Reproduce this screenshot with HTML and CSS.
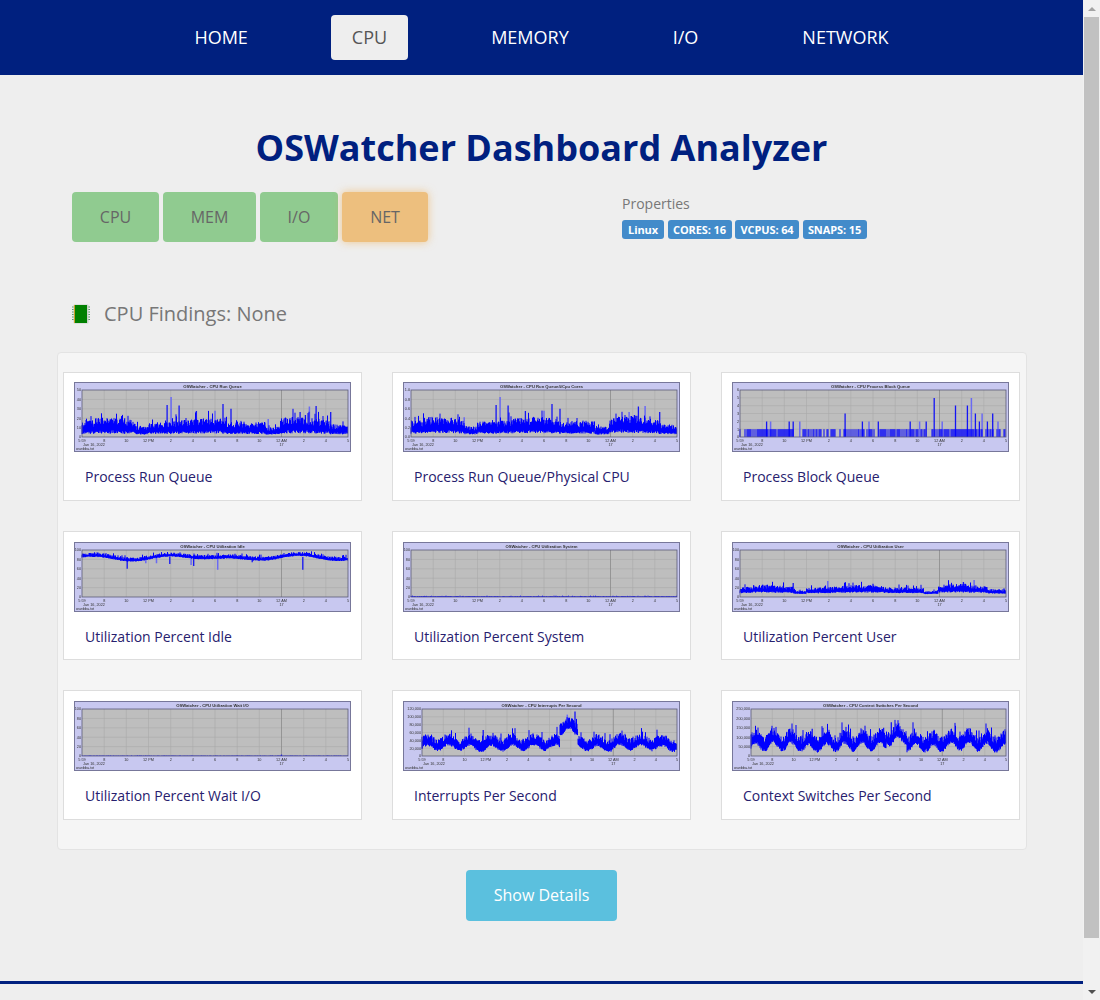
FILE: index.html
```html
<!DOCTYPE html>
<html lang="en">
<head>
    <meta charset="UTF-8">
    <meta name="viewport" content="width=device-width, initial-scale=1.0">
    <title>OSWatcher Dashboard Analyzer</title>
    <link rel="stylesheet" href="styles.css">
</head>
<body>

    <nav class="topnav">
        <a href="#">HOME</a>
        <a href="#" class="active">CPU</a>
        <a href="#">MEMORY</a>
        <a href="#">I/O</a>
        <a href="#">NETWORK</a>
    </nav>

    <main>
        <h1>OSWatcher Dashboard Analyzer</h1>

        <div class="summary">
            <div class="status-btns">
                <a href="#" class="status ok">CPU</a>
                <a href="#" class="status ok">MEM</a>
                <a href="#" class="status ok">I/O</a>
                <a href="#" class="status warn">NET</a>
            </div>
            <div class="properties">
                <p>Properties</p>
                <div class="badges">
                    <span class="badge">Linux</span>
                    <span class="badge">CORES: 16</span>
                    <span class="badge">VCPUS: 64</span>
                    <span class="badge">SNAPS: 15</span>
                </div>
            </div>
        </div>

        <h3 class="findings">
            <svg class="chip" width="18" height="20" viewBox="0 0 18 20">
                <g class="chip-pins">
                    <path d="M0 3h2M0 5.500h2M0 8h2M0 10.500h2M0 13h2M0 15.500h2"/>
                    <path d="M16 3h2M16 5.500h2M16 8h2M16 10.500h2M16 13h2M16 15.500h2"/>
                </g>
                <rect class="chip-case" x="1.500" y="0.500" width="15" height="19" rx="1"/>
                <rect class="chip-body" x="3" y="1" width="12" height="18"/>
                <rect class="chip-edge" x="2" y="1" width="1" height="18"/>
            </svg>
            CPU Findings: None
        </h3>

        <section class="well">
            <a href="#" class="thumb"><svg data-chart="runq"></svg><span>Process Run Queue</span></a>
            <a href="#" class="thumb"><svg data-chart="runqcpu"></svg><span>Process Run Queue/Physical CPU</span></a>
            <a href="#" class="thumb"><svg data-chart="block"></svg><span>Process Block Queue</span></a>
            <a href="#" class="thumb"><svg data-chart="idle"></svg><span>Utilization Percent Idle</span></a>
            <a href="#" class="thumb"><svg data-chart="system"></svg><span>Utilization Percent System</span></a>
            <a href="#" class="thumb"><svg data-chart="user"></svg><span>Utilization Percent User</span></a>
            <a href="#" class="thumb"><svg data-chart="wait"></svg><span>Utilization Percent Wait I/O</span></a>
            <a href="#" class="thumb"><svg data-chart="intr"></svg><span>Interrupts Per Second</span></a>
            <a href="#" class="thumb"><svg data-chart="ctx"></svg><span>Context Switches Per Second</span></a>
        </section>

        <div class="more">
            <button type="button">Show Details</button>
        </div>
    </main>

    <footer></footer>

    <div class="scrollbar">
        <span class="arrow up"></span>
        <span class="thumb-bar"></span>
        <span class="arrow down"></span>
    </div>

    <script src="charts.js"></script>
</body>
</html>
```

FILE: styles.css
```css
* {
    box-sizing: border-box;
    margin: 0;
    padding: 0;
}

html, body {
    height: 1000px;
    overflow: hidden;
}

body {
    font-family: 'Open Sans', sans-serif;
    font-size: 14px;
    background: #eee;
    color: #555;
    padding-right: 17px;
}

a {
    text-decoration: none;
}

/* top menu */
.topnav {
    background: #00207f;
    height: 75px;
    padding: 15px 0;
    display: flex;
    justify-content: center;
    gap: 62px;
}

.topnav a {
    color: #fff;
    font-size: 18px;
    line-height: 25px;
    padding: 10px 21px;
    border-radius: 4px;
}

.topnav a.active {
    background: #eee;
    color: #555;
}

h1 {
    color: #00207f;
    font-size: 36px;
    font-weight: 700;
    line-height: 49px;
    text-align: center;
    margin: 48px 0 20px;
}

.summary {
    display: flex;
    padding-left: 72px;
    height: 50px;
}

.status-btns {
    display: grid;
    grid-template-columns: 87px 93px 78px 86px;
    gap: 4px;
    width: 550px;
}

.status {
    height: 50px;
    font-size: 16px;
    line-height: 50px;
    text-align: center;
    border-radius: 4px;
    color: #666;
}

.status.ok {
    background: #90cb90;
}

.status.warn {
    background: #edbf7e;
    box-shadow: 0 0 8px rgba(240, 173, 78, 0.6);
}

.properties {
    padding-top: 2px;
}

.properties p {
    color: #777;
    font-size: 14px;
    line-height: 19px;
    margin-bottom: 7px;
}

.badges {
    display: grid;
    grid-template-columns: 42px 64px 64px 64px;
    gap: 3.500px;
}

.badge {
    background: #428bca;
    color: #fff;
    font-size: 11px;
    font-weight: 700;
    letter-spacing: -0.1px;
    line-height: 19px;
    text-align: center;
    border-radius: 3px;
}

.findings {
    display: flex;
    align-items: center;
    gap: 14px;
    color: #777;
    font-size: 20px;
    font-weight: 400;
    line-height: 28px;
    margin: 58px 0 24px 72px;
}

/* chart panel */
.well {
    margin-left: 57px;
    width: 970px;
    height: 498px;
    padding: 18.600px 6px 0 5px;
    background: #f5f5f5;
    border: 1px solid #e3e3e3;
    border-radius: 4px;
    display: grid;
    grid-template-columns: repeat(3, 299px);
    grid-auto-rows: 129.400px;
    gap: 30px;
}

.thumb {
    display: block;
    background: #fff;
    border: 1px solid #ddd;
    padding: 9.600px 10px 0;
    color: #27206e;
}

.thumb svg {
    display: block;
    width: 277px;
    height: 70px;
    filter: blur(0.35px);
}

.thumb span {
    display: block;
    line-height: 19px;
    padding: 15px 0 0 11px;
}

.more {
    text-align: center;
    margin-top: 20px;
}

.more button {
    background: #5bc0de;
    border: none;
    color: #fff;
    font-family: inherit;
    font-size: 16px;
    width: 151px;
    height: 51px;
    padding-bottom: 2px;
    border-radius: 4px;
}

footer {
    border-top: 3px solid #00207f;
    margin-top: 60px;
}

/* cpu icon */
.chip-pins path {
    stroke: #5c9a6c;
    stroke-width: 1;
    fill: none;
}

.chip-case {
    fill: #c8d2c8;
}

.chip-body {
    fill: #008000;
}

.chip-edge {
    fill: #c9a227;
}

/* chart parts */
.c-frame {
    fill: #c8c8f0;
    stroke: #77779a;
    stroke-width: 1;
}

.c-plot {
    fill: #bebebe;
}

.c-grid {
    stroke: #a9a9a9;
    stroke-width: 0.6;
    fill: none;
}

.c-grid-dark {
    stroke: #8a8a8a;
    stroke-width: 0.8;
    fill: none;
}

.c-border {
    fill: none;
    stroke: #5a5a78;
    stroke-width: 0.8;
}

.c-data {
    stroke: #0000ff;
    stroke-width: 1;
    fill: none;
}

.c-spike {
    stroke: #1414f5;
    stroke-width: 1.300;
    fill: none;
}

.c-soft {
    stroke: #6a6af2;
    stroke-width: 1.500;
    fill: none;
}

.c-text {
    font-family: 'Liberation Sans', sans-serif;
    font-size: 3.800px;
    fill: #333;
}

.c-title {
    font-weight: 700;
    font-size: 4.200px;
}

/* fake browser scrollbar */
.scrollbar {
    position: fixed;
    top: 0;
    right: 0;
    width: 17px;
    height: 1000px;
    background: #f1f1f1;
    display: flex;
    flex-direction: column;
    align-items: center;
}

.arrow {
    width: 17px;
    height: 17px;
    display: flex;
    align-items: center;
    justify-content: center;
}

.arrow::before {
    content: "";
    border-left: 4px solid transparent;
    border-right: 4px solid transparent;
}

.arrow.up::before {
    border-bottom: 4px solid #a3a3a3;
}

.arrow.down::before {
    border-top: 4px solid #505050;
}

.thumb-bar {
    width: 15px;
    height: 921px;
    background: #c1c1c1;
}

.scrollbar .arrow.down {
    margin-top: auto;
}
```

FILE: charts.js
```js
// thumbnails of the oswatcher graphs, drawn from rough band + spike data
const W = 277, H = 70;
const PX = 8, PY = 8, PW = 266, PH = 47;
const TICKS = ["8", "10", "12 PM", "2", "4", "6", "8", "10", "12 AM", "2", "4", "5"];

function rng(seed) {
    let s = seed;
    return function () {
        s = (s * 16807) % 2147483647;
        return (s - 1) / 2147483646;
    };
}

// day shape shared by the load charts: dips around 12 PM and 12 AM
function dayShape(t) {
    let v = 0.72 + 0.14 * Math.sin(t * 17);
    if (t < 0.05) v -= 0.12;
    if (t > 0.2 && t < 0.25) v -= 0.32;
    if (t > 0.54 && t < 0.58) v -= 0.12;
    if (t > 0.69 && t < 0.745) v -= 0.4;
    if (t > 0.745 && t < 0.85) v += 0.1;
    if (t > 0.93) v -= 0.2;
    return Math.max(v, 0.1);
}

const CHARTS = {
    runq: {
        title: "OSWatcher - CPU Run Queue", seed: 11,
        y: ["0", "10", "20", "30", "40", "50"],
        band: t => [0.04 + 0.04 * dayShape(t), 0.12 + 0.34 * dayShape(t)],
        spikes: [[.32, .68], [.335, .85], [.365, .67], [.43, .55], [.5, .56], [.53, .7], [.56, .6], [.7, .38], [.82, .53], [.84, .47], [.855, .65], [.88, .66], [.935, .53], [.1, .35], [.16, .4]]
    },
    runqcpu: {
        title: "OSWatcher - CPU Run Queue/#Cpu Cores", seed: 23,
        y: ["0.0", "0.2", "0.4", "0.6", "0.8", "1.0"],
        band: t => [0.04 + 0.05 * dayShape(t), 0.12 + 0.36 * dayShape(t)],
        spikes: [[.32, .68], [.335, .85], [.365, .67], [.43, .55], [.5, .56], [.53, .7], [.56, .6], [.82, .53], [.84, .47], [.855, .65], [.88, .66], [.935, .53], [.12, .38], [.2, .42]]
    },
    block: {
        title: "OSWatcher - CPU Process Block Queue", seed: 37, bars: true,
        y: ["0", "1", "2", "3", "4", "5", "6"],
        spikes: [[.1, .33], [.115, .33], [.185, .33], [.2, .33], [.225, .33], [.395, .5], [.46, .33], [.485, .33], [.52, .33], [.64, .33], [.675, .33], [.7, .33], [.73, .83], [.76, .33], [.81, .67], [.855, .67], [.87, .83], [.885, .5], [.9, .33], [.91, .5], [.93, .33], [.95, .5], [.97, .33]]
    },
    idle: {
        title: "OSWatcher - CPU Utilization Idle", seed: 41,
        y: ["0", "20", "40", "60", "80", "100"],
        band: t => {
            const m = 0.89 - 0.06 * Math.sin(t * 7.5 + 0.2) * Math.sin(t * 7.5 + 0.2) + 0.03 * Math.sin(t * 25);
            return [m - 0.05, m + 0.04];
        },
        down: [[.17, .6], [.28, .72], [.33, .7], [.41, .68], [.42, .66], [.51, .58], [.83, .58], [.24, .72], [.64, .74]]
    },
    system: {
        title: "OSWatcher - CPU Utilization System", seed: 53,
        y: ["0", "20", "40", "60", "80", "100"],
        band: () => [0.004, 0.02],
        spikes: []
    },
    user: {
        title: "OSWatcher - CPU Utilization User", seed: 61,
        y: ["0", "20", "40", "60", "80", "100"],
        band: t => [0.05 + 0.05 * dayShape(t), 0.07 + 0.22 * dayShape(t)],
        spikes: [[.2, .3], [.33, .34], [.5, .28], [.84, .32], [.88, .36]]
    },
    wait: {
        title: "OSWatcher - CPU Utilization Wait I/O", seed: 71,
        y: ["0", "20", "40", "60", "80", "100"],
        band: () => [0.001, 0.008],
        spikes: [[.75, .03]]
    },
    intr: {
        title: "OSWatcher - CPU Interrupts Per Second", seed: 83, left: 19,
        y: ["0", "20,000", "40,000", "60,000", "80,000", "100,000", "120,000"],
        band: t => {
            let m = 0.24 + 0.06 * Math.sin(t * 75) + 0.05 * dayShape(t);
            if (t > 0.54 && t < 0.61) m = 0.62 + 0.08 * Math.sin(t * 90);
            return [m - 0.12, m + 0.15];
        },
        spikes: [[.6, .95], [.57, .88], [.24, .55]]
    },
    ctx: {
        title: "OSWatcher - CPU Context Switches Per Second", seed: 97, left: 19,
        y: ["0", "50,000", "100,000", "150,000", "200,000", "250,000"],
        band: t => {
            let m = 0.28 + 0.09 * Math.sin(t * 90) + 0.08 * dayShape(t);
            if (t > 0.53 && t < 0.61) m += 0.13;
            return [m - 0.17, m + 0.17];
        },
        spikes: [[.55, .72], [.58, .7], [.24, .58], [.52, .6]]
    }
};

function drawChart(svg) {
    const c = CHARTS[svg.dataset.chart];
    const rand = rng(c.seed);
    const left = c.left || PX;
    const pw = PW + PX - left;
    const yAt = v => PY + PH - v * PH;
    let out = `<rect class="c-frame" x="0.5" y="0.5" width="${W - 1}" height="${H - 1}"/>`;
    out += `<rect class="c-plot" x="${left}" y="${PY}" width="${pw}" height="${PH}"/>`;

    // grid
    let grid = "", dark = "";
    for (let i = 1; i < c.y.length - 1; i++) {
        const y = (PY + PH - i * PH / (c.y.length - 1)).toFixed(1);
        grid += `M${left} ${y}h${pw}`;
    }
    TICKS.forEach((t, i) => {
        const x = (left + (i + 1) * pw / 12).toFixed(1);
        if (t === "12 AM") dark += `M${x} ${PY}v${PH}`;
        else if (i < 11) grid += `M${x} ${PY}v${PH}`;
    });
    out += `<path class="c-grid" d="${grid}"/><path class="c-grid-dark" d="${dark}"/>`;

    // data
    let data = "", soft = "", spike = "";
    if (c.bars) {
        for (let x = 0; x < pw; x += 1) {
            const t = x / pw;
            const quiet = t > 0.2 && t < 0.235;
            const busy = (t > 0.08 && t < 0.21) || (t > 0.75 && t < 0.87);
            if (!quiet && rand() < (busy ? 0.9 : 0.6)) {
                data += `M${(left + x).toFixed(1)} ${PY + PH}V${yAt(1 / 6).toFixed(1)}`;
            }
        }
    } else if (c.band) {
        for (let x = 0; x < pw; x += 0.5) {
            const [lo, hi] = c.band(x / pw);
            const a = lo + rand() * (hi - lo) * 0.2;
            let b = lo + (hi - lo) * (0.5 + rand() * 0.5);
            if (rand() < 0.06) b = hi + (hi - lo) * rand() * 0.5;
            data += `M${(left + x).toFixed(1)} ${yAt(a).toFixed(1)}V${yAt(b).toFixed(1)}`;
        }
    }
    // spikes start inside the band, not at the axis
    (c.spikes || []).forEach(([t, v], i) => {
        const x = (left + t * pw).toFixed(1);
        const from = c.band ? c.band(t)[0] : 0;
        const line = `M${x} ${yAt(from).toFixed(1)}V${yAt(v).toFixed(1)}`;
        if (i % 3 === 1) soft += line;
        else spike += line;
    });
    (c.down || []).forEach(([t, v], i) => {
        const x = (left + t * pw).toFixed(1);
        const line = `M${x} ${yAt(0.85).toFixed(1)}V${yAt(v).toFixed(1)}`;
        if (i % 2) soft += line;
        else spike += line;
    });
    out += `<path class="c-soft" d="${soft}"/><path class="c-spike" d="${spike}"/><path class="c-data" d="${data}"/>`;
    out += `<rect class="c-border" x="${left}" y="${PY}" width="${pw}" height="${PH}"/>`;

    // labels
    out += `<text class="c-text c-title" x="${W / 2}" y="5.500" text-anchor="middle">${c.title}</text>`;
    c.y.forEach((label, i) => {
        const y = yAt(i / (c.y.length - 1)) + 1.3;
        out += `<text class="c-text" x="${left - 1}" y="${y.toFixed(1)}" text-anchor="end">${label}</text>`;
    });
    out += `<text class="c-text" x="${left}" y="59.500" text-anchor="middle">5:59</text>`;
    TICKS.forEach((t, i) => {
        const x = left + (i + 1) * pw / 12;
        out += `<text class="c-text" x="${x.toFixed(1)}" y="59.500" text-anchor="middle">${t}</text>`;
    });
    out += `<text class="c-text" x="${left + 1}" y="63.500">Jan 16, 2022</text>`;
    out += `<text class="c-text" x="${left + 9 * pw / 12}" y="63.500" text-anchor="middle">17</text>`;
    out += `<text class="c-text" x="2" y="67.500">oswbba.txt</text>`;

    svg.setAttribute("viewBox", `0 0 ${W} ${H}`);
    svg.innerHTML = out;
}

document.querySelectorAll("svg[data-chart]").forEach(drawChart);
```
